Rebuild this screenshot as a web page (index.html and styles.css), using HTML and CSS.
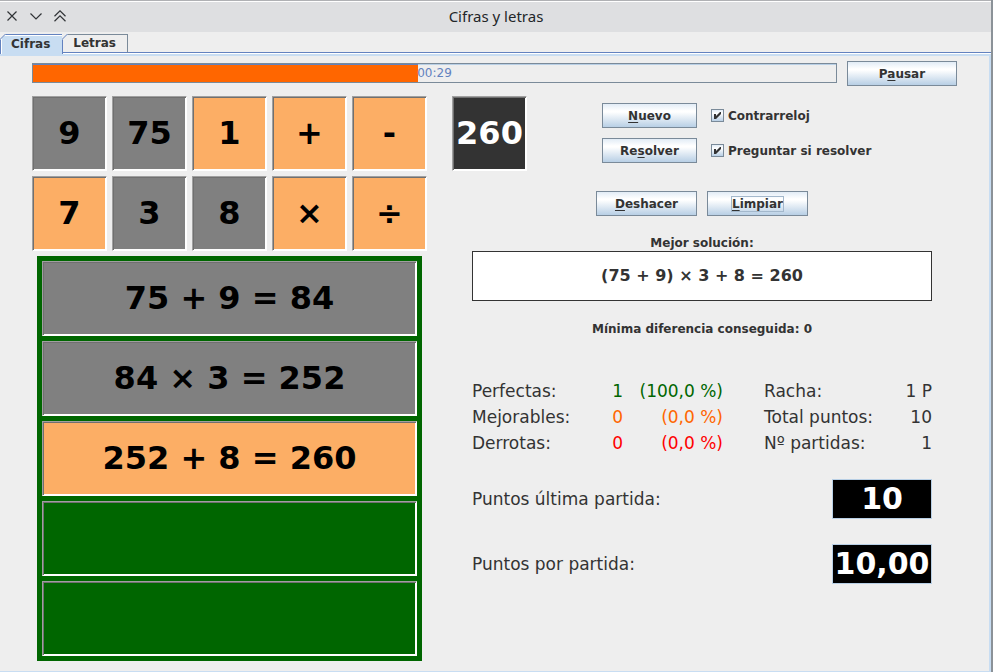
FILE: index.html
```html
<!DOCTYPE html>
<html lang="es">
<head>
<meta charset="utf-8">
<title>Cifras y letras</title>
<link rel="stylesheet" href="styles.css">
</head>
<body>
<header class="titlebar">
  <div class="window-buttons">
    <button type="button" aria-label="Cerrar"><svg viewBox="0 0 12 12"><path d="M1.500 1.500L10.500 10.500M10.500 1.500L1.500 10.500"/></svg></button>
    <button type="button" aria-label="Minimizar"><svg viewBox="0 0 12 12"><path d="M.5 3.500L6 9L11.500 3.500"/></svg></button>
    <button type="button" aria-label="Maximizar"><svg viewBox="0 0 12 12"><path d="M.5 6.200L6 .8L11.500 6.200M.5 11.200L6 5.800L11.500 11.200"/></svg></button>
  </div>
  <h1>Cifras y letras</h1>
</header>
<nav class="tabs" role="tablist">
  <button type="button" class="tab active" role="tab" aria-selected="true"><svg class="corner" viewBox="0 0 6 6"><path class="cut" d="M0 0H6L0 6Z"/><path class="edge" d="M0 5.500L5.500 0"/></svg>Cifras</button>
  <button type="button" class="tab" role="tab" aria-selected="false"><svg class="corner" viewBox="0 0 6 6"><path class="cut" d="M0 0H6L0 6Z"/><path class="edge" d="M0 5.500L5.500 0"/></svg>Letras</button>
</nav>
<main class="panel">
  <div class="timer-row">
    <div class="timer" role="progressbar" aria-label="Tiempo" aria-valuenow="48">
      <div class="timer-fill" style="width:48%"></div>
      <span class="timer-text">00:29</span>
    </div>
    <button type="button" class="btn wide">P<u>a</u>usar</button>
  </div>
  <div class="game">
    <section class="board">
      <div class="tiles">
        <button type="button" class="tile used">9</button>
        <button type="button" class="tile used">75</button>
        <button type="button" class="tile">1</button>
        <button type="button" class="tile">+</button>
        <button type="button" class="tile">-</button>
        <button type="button" class="tile">7</button>
        <button type="button" class="tile used">3</button>
        <button type="button" class="tile used">8</button>
        <button type="button" class="tile">×</button>
        <button type="button" class="tile">÷</button>
      </div>
      <div class="steps">
        <div class="tile used">75 + 9 = 84</div>
        <div class="tile used">84 × 3 = 252</div>
        <div class="tile">252 + 8 = 260</div>
        <div class="tile empty"></div>
        <div class="tile empty"></div>
      </div>
    </section>
    <section class="side">
      <div class="top">
        <div class="tile target">260</div>
        <div class="controls">
          <div class="control-row">
            <button type="button" class="btn"><u>N</u>uevo</button>
            <label class="check"><span class="box"><input type="checkbox" checked><svg viewBox="0 0 13 13"><path d="M3 5H5V7L9 3H10V5L5 10H3Z"/></svg></span>Contrarreloj</label>
          </div>
          <div class="control-row">
            <button type="button" class="btn">Re<u>s</u>olver</button>
            <label class="check"><span class="box"><input type="checkbox" checked><svg viewBox="0 0 13 13"><path d="M3 5H5V7L9 3H10V5L5 10H3Z"/></svg></span>Preguntar si resolver</label>
          </div>
        </div>
      </div>
      <div class="details">
        <div class="actions">
          <button type="button" class="btn"><u>D</u>eshacer</button>
          <button type="button" class="btn"><span class="focus"><u>L</u>impiar</span></button>
        </div>
        <h2>Mejor solución:</h2>
        <output class="solution">(75 + 9) × 3 + 8 = 260</output>
        <p class="difference">Mínima diferencia conseguida: 0</p>
        <table class="stats">
          <tr><th class="first">Perfectas:</th><td class="count good">1</td><td class="pct good">(100,0 %)</td><th class="second">Racha:</th><td>1 P</td></tr>
          <tr><th>Mejorables:</th><td class="fair">0</td><td class="fair">(0,0 %)</td><th class="second">Total puntos:</th><td>10</td></tr>
          <tr><th>Derrotas:</th><td class="bad">0</td><td class="bad">(0,0 %)</td><th class="second">Nº partidas:</th><td>1</td></tr>
        </table>
        <div class="points"><span>Puntos última partida:</span><output>10</output></div>
        <div class="points"><span>Puntos por partida:</span><output>10,00</output></div>
      </div>
    </section>
  </div>
</main>
</body>
</html>
```
FILE: styles.css
```css
* { box-sizing: border-box; }
body {
  margin: 0;
  min-height: 100vh;
  display: flex;
  flex-direction: column;
  background: #eeeeee;
  border-right: 2px solid #8b9298;
  color: #333333;
  font: bold 12px/16px "DejaVu Sans", sans-serif;
}
button { font: inherit; color: inherit; padding: 0; margin: 0; border: 0; background: none; }
h1, h2, p { margin: 0; font: inherit; }

.titlebar {
  height: 32px;
  margin-right: -1px;
  padding-bottom: 2px;
  display: grid;
  grid-template-columns: 1fr auto 1fr;
  align-items: center;
  background: #dedfe1;
  border-top: 1px solid #b0b1b4;
  box-shadow: inset 0 1px #ffffff;
}
.titlebar h1 { font: 15px/20px "Noto Sans", sans-serif; color: #232629; }
.window-buttons { display: flex; gap: 12px; padding-left: 6px; }
.window-buttons button { width: 12px; height: 12px; }
svg { display: block; }
.window-buttons path { fill: none; stroke: #303336; stroke-width: 1.2; }

.tabs { display: flex; padding-top: 2px; }
.tab {
  position: relative;
  height: 19px;
  margin-bottom: -1px;
  padding: 0 11px 1px 10px;
  border: 1px solid #7a8a99;
  border-left: 0;
  border-bottom-color: #6382bf;
}
.tab.active {
  height: 20px;
  margin-bottom: -2px;
  padding: 0 12px 2px 10px;
  background: #c8ddf2;
  border: 1px solid #6382bf;
  border-bottom: 0;
  box-shadow: inset 1px 1px #ffffff;
}
.corner { position: absolute; left: -1px; top: -1px; width: 6px; height: 6px; }
.corner .cut { fill: #eeeeee; }
.corner .edge { fill: none; stroke: #6382bf; }

.panel {
  flex: 1;
  margin-top: 2px;
  padding: 5px 32px 8px;
  border: 2px solid #c8ddf2;
  border-left: 0;
  border-bottom-width: 1px;
  box-shadow: 0 -1px #ffffff, 0 -2px #6382bf;
}
.timer-row { display: flex; align-items: flex-start; gap: 10px; }
.timer {
  flex: 1;
  height: 20px;
  margin-top: 2px;
  display: grid;
  border: 1px solid #7a8a99;
  box-shadow: inset 0 1px #b8cfe5;
  color: #6382bf;
  font-weight: normal;
}
.timer > * { grid-area: 1 / 1; }
.timer-fill { background: #ff6600; border-top: 1px solid #6382bf; }
.timer-text { text-align: center; line-height: 18px; }

.btn {
  min-width: 95px;
  height: 25px;
  border: 1px solid #7a8a99;
  background: linear-gradient(#e2ecf6, #ffffff 30%, #ffffff 35%, #b8cfe5);
}
.btn.wide { min-width: 110px; }
.btn u { text-decoration: underline; text-underline-offset: 2px; }
.focus { outline: 1px solid #a3b8cc; }

.game { display: flex; gap: 25px; padding-top: 10px; }
.board { flex: none; }
.tiles { display: grid; grid-template-columns: repeat(5, 75px); gap: 5px; }
.tile {
  height: 75px;
  padding-bottom: 2px;
  display: flex;
  align-items: center;
  justify-content: center;
  border: 1px solid;
  border-color: #a0a0a0 #ffffff #ffffff #a0a0a0;
  box-shadow: inset 1px 1px #707070, inset -1px -1px #ffffff;
  background: #fcae65;
  color: #000000;
  font-size: 32px;
  line-height: 38px;
}
.tile.used { background: #808080; }
.tile.empty { background: #006600; }
.tile.target { width: 75px; background: #333333; color: #ffffff; }
.steps {
  display: grid;
  gap: 5px;
  margin: 5px 5px 0;
  padding: 5px;
  background: #006600;
}

.side { flex: 1; }
.top { display: flex; gap: 75px; }
.controls { display: grid; align-content: start; gap: 10px; padding-top: 7px; }
.control-row { display: flex; align-items: center; gap: 14px; }
.check { display: flex; align-items: center; gap: 4px; }
.box { display: grid; width: 13px; height: 13px; }
.box > * { grid-area: 1 / 1; width: 13px; height: 13px; }
.box input {
  appearance: none;
  margin: 0;
  border: 1px solid #7a8a99;
  background: linear-gradient(#e2ecf6, #ffffff 30%, #b8cfe5);
}
.box svg { position: relative; pointer-events: none; fill: #333333; }
.details { padding: 20px 25px 0 20px; text-align: center; }
.actions { display: flex; justify-content: center; gap: 10px; }
.actions .btn { min-width: 101px; }
h2 { padding-top: 19px; }
.solution {
  display: block;
  border: 1px solid #333333;
  background: #ffffff;
  font-size: 16px;
  line-height: 48px;
}
.difference { padding-top: 20px; }
.stats {
  width: 100%;
  table-layout: fixed;
  margin: 41px 0 23px;
  border-collapse: collapse;
  font-size: 17px;
  line-height: 26px;
}
.stats th { padding: 0; text-align: left; font-weight: normal; white-space: nowrap; }
.stats td { padding: 0; text-align: right; font-weight: normal; }
.stats .first { width: 111px; }
.stats .count { width: 40px; }
.stats .pct { width: 100px; }
.stats .second { width: 159px; padding-left: 41px; }
.good { color: #006600; }
.fair { color: #ff6600; }
.bad { color: #ff0000; }
.points {
  display: flex;
  align-items: center;
  justify-content: space-between;
  margin-bottom: 25px;
  font-size: 17px;
  font-weight: normal;
}
.points output {
  width: 100px;
  border: 1px solid #b8cfe5;
  background: #000000;
  color: #ffffff;
  font-size: 30px;
  font-weight: bold;
  line-height: 38px;
}
```
